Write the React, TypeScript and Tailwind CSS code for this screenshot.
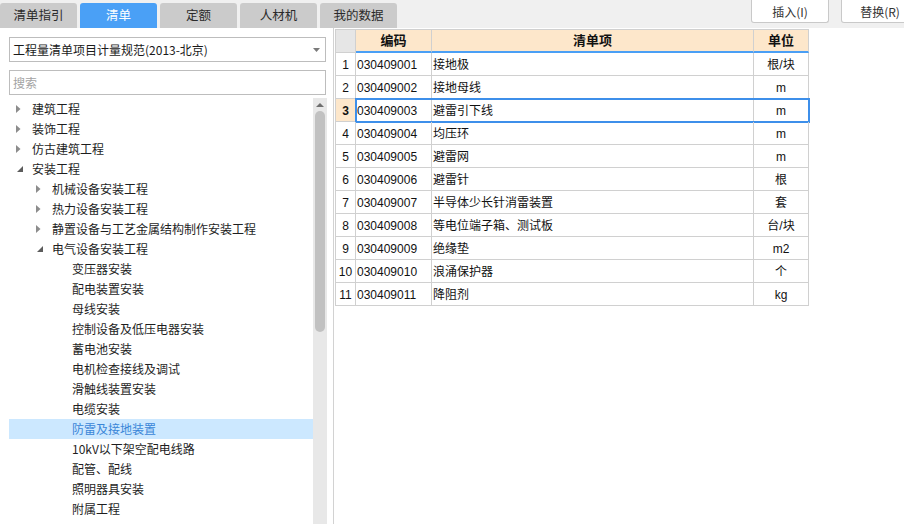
import React from "react";

const FONT = "font-['Noto_Sans_CJK_SC','Noto_Sans',sans-serif]";
const TABLE_FONT = "font-['Liberation_Sans','Noto_Sans_CJK_SC',sans-serif]";

const tabs = ["清单指引", "清单", "定额", "人材机", "我的数据"];

type Node = { label: string; level: 0 | 1 | 2; open?: boolean; selected?: boolean };

const tree: Node[] = [
  { label: "建筑工程", level: 0, open: false },
  { label: "装饰工程", level: 0, open: false },
  { label: "仿古建筑工程", level: 0, open: false },
  { label: "安装工程", level: 0, open: true },
  { label: "机械设备安装工程", level: 1, open: false },
  { label: "热力设备安装工程", level: 1, open: false },
  { label: "静置设备与工艺金属结构制作安装工程", level: 1, open: false },
  { label: "电气设备安装工程", level: 1, open: true },
  { label: "变压器安装", level: 2 },
  { label: "配电装置安装", level: 2 },
  { label: "母线安装", level: 2 },
  { label: "控制设备及低压电器安装", level: 2 },
  { label: "蓄电池安装", level: 2 },
  { label: "电机检查接线及调试", level: 2 },
  { label: "滑触线装置安装", level: 2 },
  { label: "电缆安装", level: 2 },
  { label: "防雷及接地装置", level: 2, selected: true },
  { label: "10kV以下架空配电线路", level: 2 },
  { label: "配管、配线", level: 2 },
  { label: "照明器具安装", level: 2 },
  { label: "附属工程", level: 2 },
];

const indent = { 0: "pl-[7px]", 1: "pl-[27px]", 2: "pl-[47px]" };

const rows = [
  ["030409001", "接地极", "根/块"],
  ["030409002", "接地母线", "m"],
  ["030409003", "避雷引下线", "m"],
  ["030409004", "均压环", "m"],
  ["030409005", "避雷网", "m"],
  ["030409006", "避雷针", "根"],
  ["030409007", "半导体少长针消雷装置", "套"],
  ["030409008", "等电位端子箱、测试板", "台/块"],
  ["030409009", "绝缘垫", "m2"],
  ["030409010", "浪涌保护器", "个"],
  ["030409011", "降阻剂", "kg"],
];

function Arrow({ open }: { open?: boolean }) {
  if (open) {
    return (
      <svg width="6" height="6" viewBox="0 0 6 6" className="ml-[1px]">
        <path d="M6 0V6H0Z" fill="#5c5c5c" />
      </svg>
    );
  }
  return (
    <svg width="5" height="8" viewBox="0 0 5 8">
      <path d="M0 0L4.5 4L0 8Z" fill="#8c8c8c" />
    </svg>
  );
}

function TreeRow({ node }: { node: Node }) {
  return (
    <div
      className={`flex h-5 items-center ${indent[node.level]} ${
        node.selected ? "bg-[#cce8ff] text-[#3a86d8]" : "text-[#1e1e1e]"
      }`}
    >
      <span className="flex w-4 shrink-0 items-center">
        {node.level < 2 && <Arrow open={node.open} />}
      </span>
      <span className="whitespace-nowrap text-[12px] leading-5">{node.label}</span>
    </div>
  );
}

export default function App() {
  return (
    <div className={`flex h-[524px] w-[904px] flex-col overflow-hidden bg-white ${FONT}`}>
      <div className="flex h-[28px] shrink-0 items-start bg-[#f0f0f0]">
        <div className="mt-[3px] flex gap-[3px]">
          {tabs.map((t) => (
            <div
              key={t}
              className={`flex h-[25px] w-[77px] items-center justify-center rounded-t-[3px] text-[12.5px] ${
                t === "清单" ? "bg-[#4aa0f6] text-white" : "bg-[#cbcbcb] text-[#2a2a2a]"
              }`}
            >
              {t}
            </div>
          ))}
        </div>
        <div className="ml-auto -mr-[15px] flex gap-[12px]">
          <button className="h-[23px] w-[78px] rounded-b-[3px] border border-t-0 border-[#c9c9c9] bg-white pt-px text-[12px] text-[#333]">
            插入(I)
          </button>
          <button className="h-[23px] w-[78px] rounded-b-[3px] border border-t-0 border-[#c9c9c9] bg-white pt-px text-[12px] text-[#333]">
            替换(R)
          </button>
        </div>
      </div>

      <div className="flex min-h-0 flex-1">
        <div className="flex w-[334px] shrink-0 flex-col border-r border-[#d2d2d2] pl-[9px] pr-[6px] pt-[9px]">
          <div className="flex h-[25px] w-[317px] items-center justify-between border border-[#bdbdbd] pl-[3px] pr-[5px]">
            <span className="text-[12px] text-[#1a1a1a]">工程量清单项目计量规范(2013-北京)</span>
            <svg width="7" height="4" viewBox="0 0 7 4">
              <path d="M0 0H7L3.5 4Z" fill="#7a7a7a" />
            </svg>
          </div>
          <div className="mt-[8px] flex h-[25px] w-[317px] items-center border border-[#bdbdbd] pl-[3px]">
            <span className="text-[12px] text-[#a3a3a3]">搜索</span>
          </div>
          <div className="mt-[3px] flex min-h-0 flex-1">
            <div className="min-w-0 flex-1 overflow-hidden pt-px">
              {tree.map((n) => (
                <TreeRow key={n.label} node={n} />
              ))}
            </div>
            <div className="flex w-[14px] shrink-0 flex-col items-center bg-[#e8e8e8]">
              <div className="flex h-[12px] items-center justify-center pt-[2px]">
                <svg width="8" height="4" viewBox="0 0 8 4">
                  <path d="M0 4H8L4 0Z" fill="#6f6f6f" />
                </svg>
              </div>
              <div className="mt-px h-[221px] w-[10px] rounded-full bg-[#c1c1c1]" />
            </div>
          </div>
        </div>

        <div className={`flex-1 pl-px pt-px text-[12px] text-[#111] ${TABLE_FONT}`}>
          <div className="w-[474px] border-l border-t border-[#d0d0d0]">
            <div className="flex h-[23px] text-[13px] font-bold">
              <div className="w-[20px] border-b border-r border-[#d0d0d0] bg-[#e6e6e6]" />
              <div className="flex w-[76px] items-center justify-center border-b-2 border-r border-b-[#4a9ff5] border-r-[#d0d0d0] bg-[#fde7cb]">
                编码
              </div>
              <div className="flex w-[322px] items-center justify-center border-b-2 border-r border-b-[#4a9ff5] border-r-[#d0d0d0] bg-[#fde7cb]">
                清单项
              </div>
              <div className="flex w-[55px] items-center justify-center border-b-2 border-r border-b-[#4a9ff5] border-r-[#d0d0d0] bg-[#fde7cb]">
                单位
              </div>
            </div>
            {rows.map(([code, name, unit], i) => {
              const sel = i === 2;
              return (
                <div key={code} className="flex h-[23px]">
                  <div
                    className={`flex w-[20px] items-center justify-center border-b border-r border-[#d0d0d0] pt-px ${
                      sel ? "bg-[#fde7cb] font-bold" : "bg-white"
                    }`}
                  >
                    {i + 1}
                  </div>
                  <div
                    className={`flex ${
                      sel ? "outline-2 -outline-offset-1 outline-[#3d8fea]" : ""
                    }`}
                  >
                    <div className="flex w-[76px] items-center border-b border-r border-[#d0d0d0] pl-px pt-px">
                      {code}
                    </div>
                    <div className="flex w-[322px] items-center border-b border-r border-[#d0d0d0] pl-px pt-px">
                      {name}
                    </div>
                    <div className="flex w-[55px] items-center justify-center border-b border-r border-[#d0d0d0] pt-px">
                      {unit}
                    </div>
                  </div>
                </div>
              );
            })}
          </div>
        </div>
      </div>
    </div>
  );
}
